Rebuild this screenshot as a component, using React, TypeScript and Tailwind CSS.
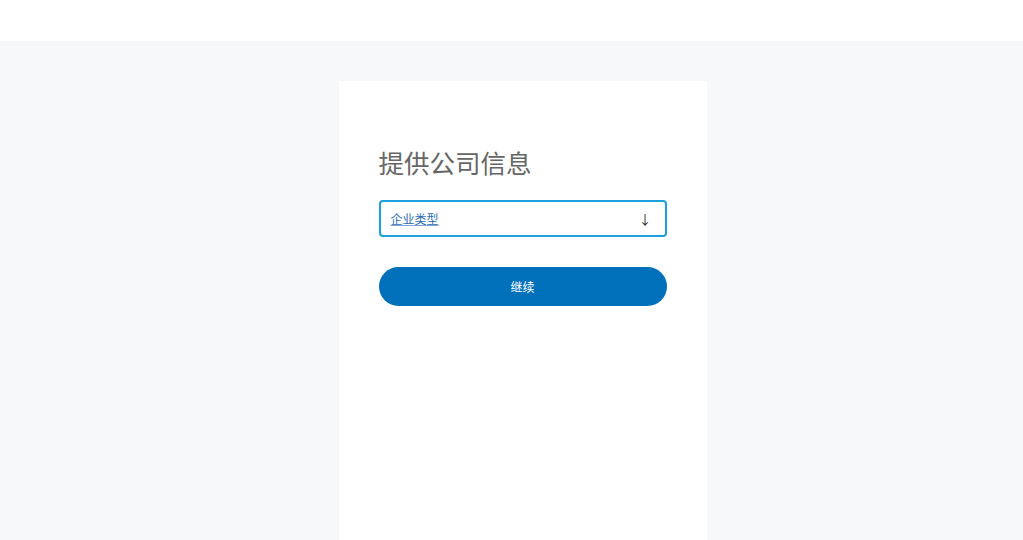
import React from "react";

const App = () => {
  return (
    <div
      className="flex min-h-[540px] flex-col bg-white"
      style={{ fontFamily: '"Noto Sans CJK SC", "Liberation Sans", sans-serif' }}
    >
      <div className="h-[41px] bg-white" />
      <div className="flex flex-1 justify-center bg-[#f7f8fa] pl-[22px] pt-10">
        <div className="h-[459px] w-[368px] bg-white px-10 pt-[64px]">
          <h1 className="text-[25.5px] leading-[34px] font-normal text-[#666666]">提供公司信息</h1>

          <div className="mt-[21px] flex h-[37px] items-center justify-between rounded border-2 border-[#1ba0de] pl-[10px] pr-[13px]">
            <span className="text-[12px] text-[#2f6db3] underline decoration-[#7fa6d6]">企业类型</span>
            <span className="text-[13px] leading-none text-[#2a2a2a]">↓</span>
          </div>

          <button className="mt-[30px] flex h-[39px] w-full items-center justify-center rounded-full bg-[#0070ba] text-[12px] text-white">
            继续
          </button>
        </div>
      </div>
    </div>
  );
};

export default App;
